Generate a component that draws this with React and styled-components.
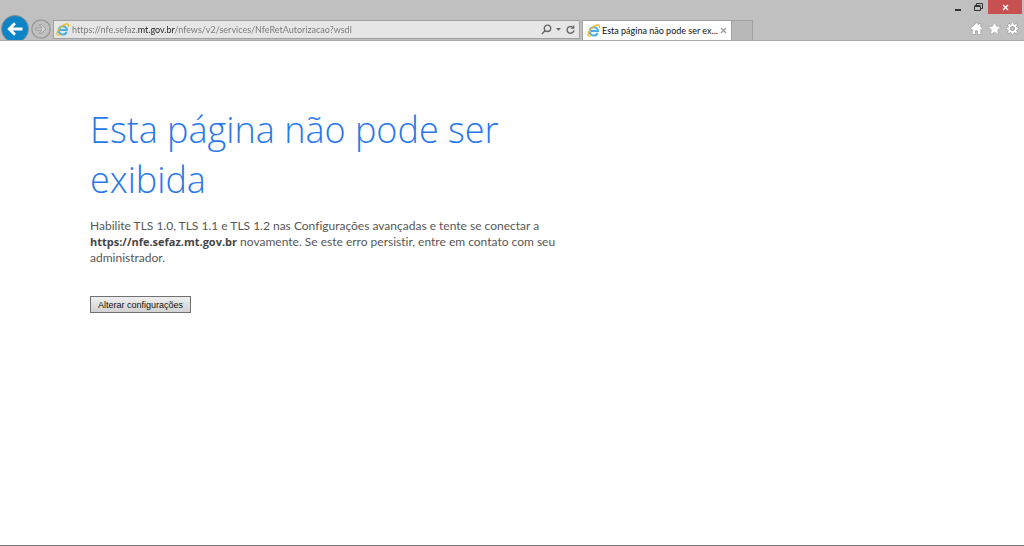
import React from 'react';
import styled, { createGlobalStyle } from 'styled-components';

const GlobalStyle = createGlobalStyle`
  * { box-sizing: border-box; }
  body { margin: 0; background: #fff; }
  button, input { font: inherit; margin: 0; padding: 0; border: 0; background: none; color: inherit; }
  svg { display: block; }
`;

const Window = styled.div`
  min-height: 100vh;
  display: flex;
  flex-direction: column;
  font-family: Lato, "Open Sans", sans-serif;
  font-variant-ligatures: none;
  border-bottom: 1px solid #777;
`;

const Chrome = styled.header`
  background: #c0c0c0;
  border-bottom: 1px solid #aaa;
`;

const TitleBar = styled.div`
  height: 14px;
  display: flex;
  justify-content: flex-end;
  padding-right: 2px;
`;

const WindowButton = styled.button`
  width: ${(p) => p.$width}px;
  height: 14px;
  display: flex;
  align-items: center;
  justify-content: center;
  background: ${(p) => (p.$danger ? '#c75050' : 'transparent')};
`;

const Toolbar = styled.div`
  height: 26px;
  display: flex;
  align-items: flex-end;
  overflow: hidden;
`;

const NavButton = styled.button`
  flex: none;
  width: ${(p) => p.$size}px;
  height: 26px;
  margin-left: ${(p) => p.$gap}px;
`;

const AddressBar = styled.form`
  flex: 1 1 527px;
  max-width: 527px;
  min-width: 200px;
  height: 19px;
  margin: 0 0 1px 2px;
  padding: 0 3px 0 2px;
  display: flex;
  align-items: center;
  gap: 3px;
  background: #e6e6e6;
  border: 1px solid #a0a0a0;
`;

const AddressInput = styled.input`
  flex: 1;
  min-width: 0;
  height: 17px;
  font-size: 9px;
  line-height: 16px;
  outline: none;
  color: transparent;
  background: linear-gradient(90deg, #777 65px, #222 65px, #222 103px, #777 103px);
  background-clip: text;
  -webkit-background-clip: text;
`;

const IconButton = styled.button`
  flex: none;
  display: flex;
  align-items: center;
  justify-content: center;
`;

const Tabs = styled.div`
  display: flex;
  height: 20px;
  margin-left: 2px;
`;

const Tab = styled.div`
  width: 150px;
  padding: 0 4px;
  display: flex;
  align-items: center;
  gap: 2px;
  background: #fff;
  border: 1px solid #a0a0a0;
  border-bottom: 0;
`;

const TabTitle = styled.span`
  flex: 1;
  overflow: hidden;
  white-space: nowrap;
  font-size: 9px;
  line-height: 16px;
  color: #111;
`;

const NewTab = styled.button`
  width: 21px;
  border: 1px solid #a0a0a0;
  border-width: 1px 1px 0 0;
  background: #b9b9b9;
`;

const Tools = styled.div`
  margin-left: auto;
  padding: 0 5px 5px 8px;
  display: flex;
  gap: 5px;
`;

const Content = styled.main`
  width: 100%;
  max-width: 586px;
  padding: 64px 16px 24px 90px;
`;

const Heading = styled.h1`
  margin: 0;
  font-family: "Open Sans", "Noto Sans", sans-serif;
  font-size: 36px;
  line-height: 50px;
  font-weight: 300;
  color: #2778ec;
`;

const Message = styled.p`
  margin: 13px 0 30px;
  font-size: 12px;
  line-height: 16px;
  color: #575757;
`;

const Host = styled.strong`
  font-family: "Open Sans", "Noto Sans", sans-serif;
  font-size: 11px;
  line-height: 1;
  color: #454545;
`;

const SettingsButton = styled.button`
  display: block;
  height: 17px;
  padding: 0 7px;
  border: 1px solid #707070;
  background: linear-gradient(#efefef, #d2d2d2);
  font-family: "Liberation Sans", Arial, sans-serif;
  font-size: 9px;
  line-height: 14px;
  color: #111;
`;

const IeLogo = () => (
  <svg width="13" height="13" viewBox="0 0 13 13" fill="none" aria-hidden="true">
    <path d="M10.700 9A4.200 4.200 0 1 1 11 6.900H3.800" stroke="#48aee6" strokeWidth="2" />
    <path d="M2.200 12.100C-.6 11.600 1.800 6.400 5.800 3.200 8.800.8 12.200.2 12.400 2c.1.700-.1 1.300-.4 2" stroke="#edbd2c" strokeWidth="1.400" />
    <path d="M2.200 12.100c.8.200 1.700-.1 2.600-.6" stroke="#edbd2c" strokeWidth="1.200" />
  </svg>
);

export default function App() {
  return (
    <Window>
      <GlobalStyle />
      <Chrome>
        <TitleBar>
          <WindowButton $width={20} aria-label="Minimizar">
            <svg width="8" height="12" viewBox="0 0 8 12"><path d="M1 9h6" stroke="#333" strokeWidth="2" /></svg>
          </WindowButton>
          <WindowButton $width={20} aria-label="Restaurar">
            <svg width="9" height="9" viewBox="0 0 9 9" fill="none" stroke="#333">
              <path d="M2.500 2V.5h6v5H7" />
              <path d="M.5 3.500h6v4h-6zM.5 2.500h6" />
            </svg>
          </WindowButton>
          <WindowButton $width={34} $danger aria-label="Fechar">
            <svg width="7" height="7" viewBox="0 0 7 7"><path d="M1 1l5 5M6 1L1 6" stroke="#fff" strokeWidth="1.400" /></svg>
          </WindowButton>
        </TitleBar>
        <Toolbar>
          <NavButton $size={28} $gap={1} aria-label="Voltar">
            <svg width="28" height="26" viewBox="0 0 28 26" fill="none">
              <circle cx="14" cy="15" r="13.500" fill="#0c84c6" stroke="#7f8f98" />
              <path d="M21.500 15H9M14 9.200L8.200 15l5.800 5.800" stroke="#fff" strokeWidth="2.800" />
            </svg>
          </NavButton>
          <NavButton $size={20} $gap={2} aria-label="Avançar">
            <svg width="20" height="26" viewBox="0 0 20 26" fill="none" stroke="#969696">
              <circle cx="10" cy="15" r="9.200" strokeWidth="1.200" />
              <path d="M4.800 13.900h6.200l-2.900-3.200h2.600L14.900 15l-4.200 4.300H8.100l2.900-3.200H4.800z" fill="#d2d2d2" strokeWidth=".8" />
            </svg>
          </NavButton>
          <AddressBar onSubmit={(e) => e.preventDefault()}>
            <IeLogo />
            <AddressInput
              aria-label="Endereço"
              spellCheck={false}
              defaultValue="https://nfe.sefaz.mt.gov.br/nfews/v2/services/NfeRetAutorizacao?wsdl"
            />
            <IconButton type="submit" aria-label="Pesquisar">
              <svg width="11" height="11" viewBox="0 0 11 11" fill="none" stroke="#666" strokeWidth="1.400">
                <circle cx="6.500" cy="4.300" r="3.200" />
                <path d="M4.200 6.600L.9 9.900" />
              </svg>
            </IconButton>
            <IconButton type="button" aria-label="Mostrar endereços">
              <svg width="7" height="5" viewBox="0 0 7 5"><path d="M1 1h5L3.500 3.700z" fill="#666" /></svg>
            </IconButton>
            <IconButton type="button" aria-label="Atualizar">
              <svg width="11" height="11" viewBox="0 0 11 11" fill="none">
                <path d="M8.900 6.200A3.400 3.400 0 1 1 7.300 3" stroke="#666" strokeWidth="1.400" />
                <path d="M9.300.7v4H5.500z" fill="#666" />
              </svg>
            </IconButton>
          </AddressBar>
          <Tabs>
            <Tab>
              <IeLogo />
              <TabTitle>Esta página não pode ser ex...</TabTitle>
              <IconButton aria-label="Fechar guia">
                <svg width="7" height="7" viewBox="0 0 7 7"><path d="M1 1l5 5M6 1L1 6" stroke="#999" strokeWidth="1.300" /></svg>
              </IconButton>
            </Tab>
            <NewTab aria-label="Nova guia" />
          </Tabs>
          <Tools>
            <IconButton aria-label="Página inicial">
              <svg width="13" height="13" viewBox="0 0 13 13">
                <path d="M6.500.7L.4 6.700l1.100 1.100.7-.6v5.300h3.300V8.800h2v3.700h3.300V7.200l.7.600 1.100-1.100-1.800-1.800V1.500H8.700v1.300z" fill="#fff" stroke="#8e8e8e" strokeWidth=".6" />
              </svg>
            </IconButton>
            <IconButton aria-label="Favoritos">
              <svg width="13" height="13" viewBox="0 0 13 13">
                <path d="M6.500.2l1.900 4 4.400.5-3.200 3.100.9 4.700-4-2.400-4 2.400.9-4.700L.2 4.700l4.400-.5z" fill="#fff" stroke="#9a9a9a" strokeWidth=".5" />
              </svg>
            </IconButton>
            <IconButton aria-label="Ferramentas">
              <svg width="13" height="13" viewBox="0 0 13 13" fill="none">
                <path d="M6.500.2v12.600M.2 6.500h12.600M2.100 2.100l8.800 8.800M10.900 2.100l-8.800 8.800" stroke="#8e8e8e" strokeWidth="3" />
                <circle cx="6.500" cy="6.500" r="4.800" fill="#8e8e8e" />
                <path d="M6.500.6v11.800M.6 6.500h11.800M2.400 2.400l8.200 8.200M10.600 2.400l-8.200 8.200" stroke="#fff" strokeWidth="2" />
                <circle cx="6.500" cy="6.500" r="4.300" fill="#fff" />
                <circle cx="6.500" cy="6.500" r="2" fill="#c0c0c0" stroke="#8e8e8e" strokeWidth=".8" />
              </svg>
            </IconButton>
          </Tools>
        </Toolbar>
      </Chrome>
      <Content>
        <Heading>Esta página não pode ser exibida</Heading>
        <Message>
          Habilite TLS 1.0, TLS 1.1 e TLS 1.2 nas Configurações avançadas e tente se conectar a{' '}
          <Host>https://nfe.sefaz.mt.gov.br</Host> novamente. Se este erro persistir, entre em contato com seu
          administrador.
        </Message>
        <SettingsButton>Alterar configurações</SettingsButton>
      </Content>
    </Window>
  );
}
